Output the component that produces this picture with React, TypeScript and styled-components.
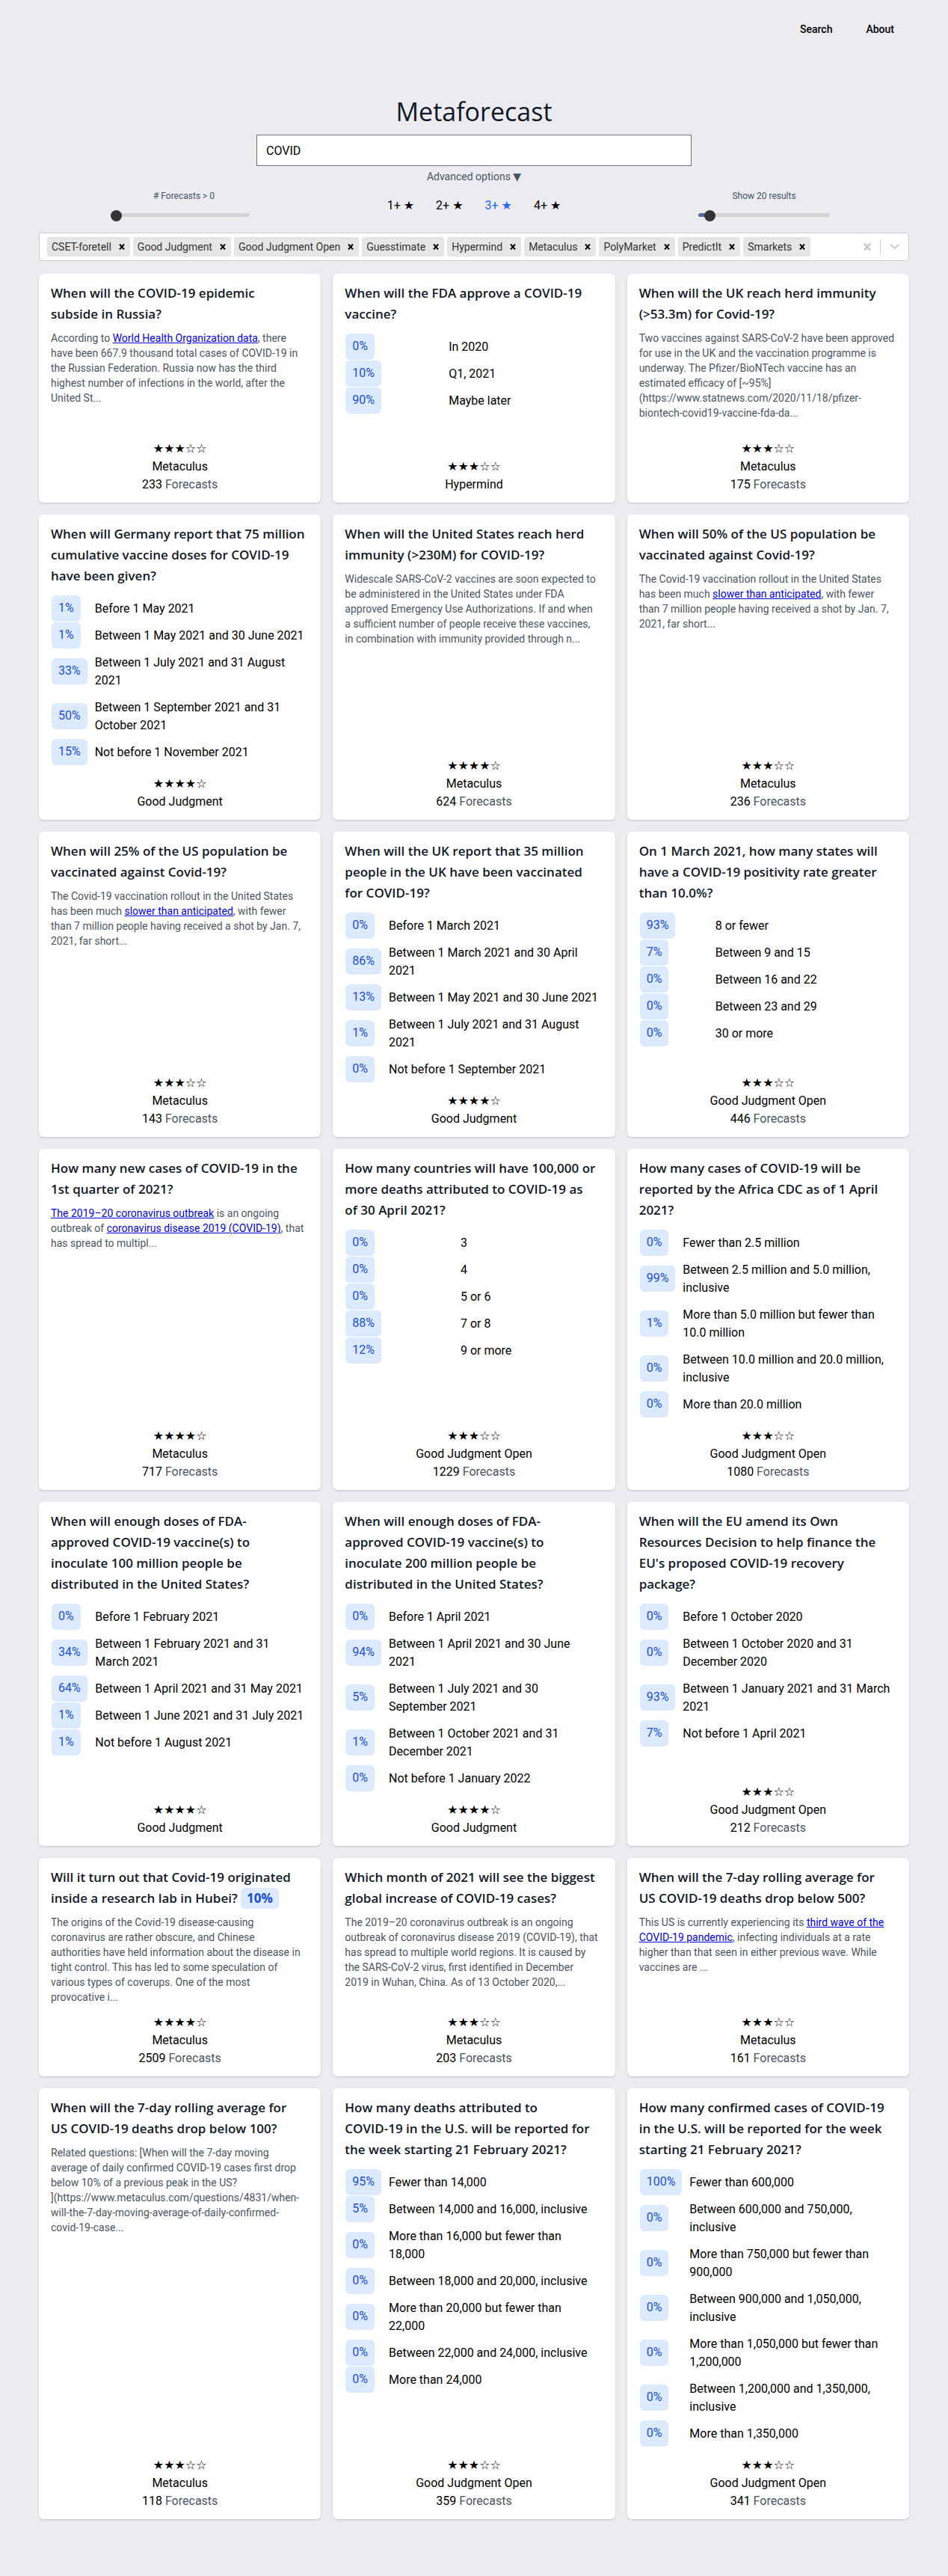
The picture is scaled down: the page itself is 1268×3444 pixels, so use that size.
import React, { useState } from "react";
import styled, { createGlobalStyle } from "styled-components";

const GlobalStyle = createGlobalStyle`
  *, *::before, *::after { box-sizing: border-box; }
  body {
    margin: 0;
    background: #ebebf0;
    color: #000;
    font: 400 16px/24px Roboto, "DejaVu Sans", sans-serif;
  }
  button, input { font: inherit; color: inherit; }
`;

const headingFont = '"Open Sans", "Noto Sans", sans-serif';

const Page = styled.div`
  padding: 0 52px 76px;
`;

const Nav = styled.nav`
  display: flex;
  justify-content: flex-end;
  gap: 45px;
  padding: 29px 20px 80px 0;
`;

const NavLink = styled.a`
  color: #000;
  font-size: 14px;
  font-weight: 500;
  line-height: 20px;
  text-decoration: none;
`;

const Heading = styled.h1`
  margin: 0 0 11px;
  color: #111827;
  font: 400 34px/40px ${headingFont};
  text-align: center;
`;

const SearchForm = styled.form`
  display: flex;
  flex-direction: column;
  align-items: center;
  gap: 4px;
`;

const SearchInput = styled.input`
  width: 50%;
  height: 42px;
  padding: 0 12px;
  border: 1px solid #6b7280;
  border-radius: 0;
  background: #fff;
`;

const AdvancedToggle = styled.button`
  padding: 0;
  border: 0;
  background: none;
  color: #4b5563;
  font-size: 14px;
  line-height: 20px;
  cursor: pointer;
`;

const Options = styled.div`
  display: grid;
  grid-template-columns: repeat(3, 1fr);
  justify-items: center;
  padding: 8px 0 16px;
`;

const SliderField = styled.label`
  display: flex;
  flex-direction: column;
  align-items: center;
  gap: 10px;
  width: 176px;
  color: #475569;
  font-size: 12px;
  line-height: 16px;
`;

const Slider = styled.input<{ $fill: number; $overhang?: number }>`
  appearance: none;
  align-self: flex-end;
  width: ${(p) => 176 + (p.$overhang ?? 0)}px;
  height: 15px;
  margin: 0;
  background: none;

  &::-webkit-slider-runnable-track {
    height: 5px;
    border-radius: 3px;
    background: linear-gradient(to right, #546e9a ${(p) => p.$fill}%, #d3d3d1 ${(p) => p.$fill}%);
  }

  &::-webkit-slider-thumb {
    appearance: none;
    width: 15px;
    height: 15px;
    margin-top: -4px;
    border-radius: 50%;
    background: #343434;
  }
`;

const StarFilters = styled.div`
  display: flex;
  gap: 29px;
  padding-top: 9px;
`;

const StarFilter = styled.button<{ $active: boolean }>`
  height: 24px;
  padding: 0;
  border: 0;
  background: none;
  color: ${(p) => (p.$active ? "#2563eb" : "#000")};
  line-height: 24px;
  cursor: pointer;
`;

const PlatformSelect = styled.div`
  display: flex;
  align-items: center;
  min-height: 38px;
  margin-bottom: 17px;
  padding: 0 12px 0 10px;
  border: 1px solid #ccc;
  border-radius: 4px;
  background: #fff;
`;

const Tags = styled.ul`
  display: flex;
  flex: 1;
  flex-wrap: wrap;
  gap: 4px;
  margin: 0;
  padding: 0;
  list-style: none;
`;

const Tag = styled.li`
  display: flex;
  align-items: center;
  height: 26px;
  padding-left: 6px;
  border-radius: 2px;
  background: #e6e6e6;
  color: #333;
  font-size: 14px;
  line-height: 20px;
`;

const IconButton = styled.button<{ $tone: string; $pad: string }>`
  display: flex;
  padding: ${(p) => p.$pad};
  border: 0;
  background: none;
  color: ${(p) => p.$tone};
  cursor: pointer;
`;

const Divider = styled.span`
  width: 1px;
  height: 20px;
  background: #ccc;
`;

const Cards = styled.main`
  display: grid;
  grid-template-columns: repeat(3, minmax(0, 1fr));
  gap: 16px;
`;

const CardBox = styled.article`
  display: flex;
  flex-direction: column;
  padding: 12px 16px;
  border-radius: 6px;
  background: #fff;
  box-shadow: 0 1px 3px rgba(0, 0, 0, 0.1), 0 1px 2px rgba(0, 0, 0, 0.08);
`;

const CardTitle = styled.h2`
  margin: 0 0 8px;
  color: #111827;
  font: 600 17px/28px ${headingFont};
  white-space: pre-line;
`;

const TitleBadge = styled.span`
  display: inline-block;
  padding: 0 8px;
  border-radius: 6px;
  background: #dbeafe;
  color: #1d4ed8;
  font-weight: 700;
`;

const Description = styled.p<{ $roomy?: boolean }>`
  margin: 0;
  padding-bottom: ${(p) => (p.$roomy ? 26 : 12)}px;
  color: #4b5563;
  font-size: 14px;
  line-height: 20px;
  white-space: pre-line;
`;

const TextLink = styled.a`
  color: #00e;
`;

const Outcomes = styled.table`
  width: 100%;
  margin: 4px 0 12px;
  border-collapse: collapse;
`;

const ChanceCell = styled.td`
  padding: 0 10px 1px 1px;
`;

const Chance = styled.span`
  display: block;
  width: fit-content;
  padding: 5px 9px 6px;
  border-radius: 6px;
  background: #dbeafe;
  color: #1d4ed8;
`;

const OutcomeName = styled.th`
  padding: 6px 4px 6px 0;
  font-weight: 400;
  text-align: left;
  white-space: pre-line;
`;

const CardFooter = styled.footer`
  display: flex;
  flex-direction: column;
  align-items: center;
  margin-top: auto;
`;

const Count = styled.span`
  color: #4b5563;
`;

const CountValue = styled.span`
  color: #000;
`;

type Part = string | { link: string };

interface Forecast {
  title: string;
  chance?: string;
  text?: Part[];
  roomy?: boolean;
  outcomes?: [string, string][];
  stars: number;
  platform: string;
  count?: number;
}

const rollout: Part[] = [
  "The Covid-19 vaccination rollout in the United States has been much ",
  { link: "slower than anticipated" },
  ", with fewer than 7 million people having received a shot by Jan. 7, 2021, far short...",
];

const forecasts: Forecast[] = [
  {
    title: "When will the COVID-19 epidemic\nsubside in Russia?",
    text: [
      "According to ",
      { link: "World Health Organization data" },
      ", there have been 667.9 thousand total cases of COVID-19 in the Russian Federation. Russia now has the third highest number of infections in the world, after the United St...",
    ],
    stars: 3, platform: "Metaculus", count: 233,
  },
  {
    title: "When will the FDA approve a COVID-19 vaccine?",
    outcomes: [["0%", "In 2020"], ["10%", "Q1, 2021"], ["90%", "Maybe later"]],
    stars: 3, platform: "Hypermind",
  },
  {
    title: "When will the UK reach herd immunity (>53.3m) for Covid-19?",
    text: [
      "Two vaccines against SARS-CoV-2 have been approved for use in the UK and the vaccination programme is underway. The Pfizer/BioNTech vaccine has an estimated efficacy of [~95%]\n(https://www.statnews.com/2020/11/18/pfizer-biontech-covid19-vaccine-fda-da...",
    ],
    roomy: true,
    stars: 3, platform: "Metaculus", count: 175,
  },
  {
    title: "When will Germany report that 75 million cumulative vaccine doses for COVID-19 have been given?",
    outcomes: [
      ["1%", "Before 1 May 2021"],
      ["1%", "Between 1 May 2021 and 30 June 2021"],
      ["33%", "Between 1 July 2021 and 31 August 2021"],
      ["50%", "Between 1 September 2021 and 31 October 2021"],
      ["15%", "Not before 1 November 2021"],
    ],
    stars: 4, platform: "Good Judgment",
  },
  {
    title: "When will the United States reach herd immunity (>230M) for COVID-19?",
    text: [
      "Widescale SARS-CoV-2 vaccines are soon expected to be administered in the United States under FDA approved Emergency Use Authorizations. If and when\na sufficient number of people receive these vaccines,\nin combination with immunity provided through n...",
    ],
    stars: 4, platform: "Metaculus", count: 624,
  },
  {
    title: "When will 50% of the US population be vaccinated against Covid-19?",
    text: rollout,
    stars: 3, platform: "Metaculus", count: 236,
  },
  {
    title: "When will 25% of the US population be vaccinated against Covid-19?",
    text: rollout,
    stars: 3, platform: "Metaculus", count: 143,
  },
  {
    title: "When will the UK report that 35 million people in the UK have been vaccinated for COVID-19?",
    outcomes: [
      ["0%", "Before 1 March 2021"],
      ["86%", "Between 1 March 2021 and 30 April 2021"],
      ["13%", "Between 1 May 2021 and 30 June 2021"],
      ["1%", "Between 1 July 2021 and 31 August 2021"],
      ["0%", "Not before 1 September 2021"],
    ],
    stars: 4, platform: "Good Judgment",
  },
  {
    title: "On 1 March 2021, how many states will have a COVID-19 positivity rate greater than 10.0%?",
    outcomes: [
      ["93%", "8 or fewer"],
      ["7%", "Between 9 and 15"],
      ["0%", "Between 16 and 22"],
      ["0%", "Between 23 and 29"],
      ["0%", "30 or more"],
    ],
    stars: 3, platform: "Good Judgment Open", count: 446,
  },
  {
    title: "How many new cases of COVID-19 in the 1st quarter of 2021?",
    text: [
      { link: "The 2019–20 coronavirus outbreak" },
      " is an ongoing outbreak of ",
      { link: "coronavirus disease 2019 (COVID-19)" },
      ", that has spread to multipl...",
    ],
    stars: 4, platform: "Metaculus", count: 717,
  },
  {
    title: "How many countries will have 100,000 or more deaths attributed to COVID-19 as\nof 30 April 2021?",
    outcomes: [["0%", "3"], ["0%", "4"], ["0%", "5 or 6"], ["88%", "7 or 8"], ["12%", "9 or more"]],
    stars: 3, platform: "Good Judgment Open", count: 1229,
  },
  {
    title: "How many cases of COVID-19 will be reported by the Africa CDC as of 1 April 2021?",
    outcomes: [
      ["0%", "Fewer than 2.5 million"],
      ["99%", "Between 2.5 million and 5.0 million, inclusive"],
      ["1%", "More than 5.0 million but fewer than 10.0 million"],
      ["0%", "Between 10.0 million and 20.0 million, inclusive"],
      ["0%", "More than 20.0 million"],
    ],
    stars: 3, platform: "Good Judgment Open", count: 1080,
  },
  {
    title: "When will enough doses of FDA-\napproved COVID-19 vaccine(s) to\ninoculate 100 million people be\ndistributed in the United States?",
    outcomes: [
      ["0%", "Before 1 February 2021"],
      ["34%", "Between 1 February 2021 and 31\nMarch 2021"],
      ["64%", "Between 1 April 2021 and 31 May 2021"],
      ["1%", "Between 1 June 2021 and 31 July 2021"],
      ["1%", "Not before 1 August 2021"],
    ],
    stars: 4, platform: "Good Judgment",
  },
  {
    title: "When will enough doses of FDA-\napproved COVID-19 vaccine(s) to\ninoculate 200 million people be\ndistributed in the United States?",
    outcomes: [
      ["0%", "Before 1 April 2021"],
      ["94%", "Between 1 April 2021 and 30 June\n2021"],
      ["5%", "Between 1 July 2021 and 30\nSeptember 2021"],
      ["1%", "Between 1 October 2021 and 31 December 2021"],
      ["0%", "Not before 1 January 2022"],
    ],
    stars: 4, platform: "Good Judgment",
  },
  {
    title: "When will the EU amend its Own Resources Decision to help finance the EU's proposed COVID-19 recovery package?",
    outcomes: [
      ["0%", "Before 1 October 2020"],
      ["0%", "Between 1 October 2020 and 31 December 2020"],
      ["93%", "Between 1 January 2021 and 31 March 2021"],
      ["7%", "Not before 1 April 2021"],
    ],
    stars: 3, platform: "Good Judgment Open", count: 212,
  },
  {
    title: "Will it turn out that Covid-19 originated inside a research lab in Hubei?",
    chance: "10%",
    text: [
      "The origins of the Covid-19 disease-causing coronavirus are rather obscure, and Chinese\nauthorities have held information about the disease in\ntight control. This has led to some speculation of\nvarious types of coverups. One of the most\nprovocative i...",
    ],
    stars: 4, platform: "Metaculus", count: 2509,
  },
  {
    title: "Which month of 2021 will see the biggest global increase of COVID-19 cases?",
    text: [
      "The 2019–20 coronavirus outbreak is an ongoing outbreak of coronavirus disease 2019 (COVID-19), that has spread to multiple world regions. It is caused by\nthe SARS-CoV-2 virus, first identified in December\n2019 in Wuhan, China. As of 13 October 2020,...",
    ],
    stars: 3, platform: "Metaculus", count: 203,
  },
  {
    title: "When will the 7-day rolling average for\nUS COVID-19 deaths drop below 500?",
    text: [
      "This US is currently experiencing its ",
      { link: "third wave of the COVID-19 pandemic" },
      ", infecting individuals at a rate higher than that seen in either previous wave. While vaccines are ...",
    ],
    stars: 3, platform: "Metaculus", count: 161,
  },
  {
    title: "When will the 7-day rolling average for\nUS COVID-19 deaths drop below 100?",
    text: [
      "Related questions: [When will the 7-day moving\naverage of daily confirmed COVID-19 cases first drop\nbelow 10% of a previous peak in the US?\n](https://www.metaculus.com/questions/4831/when-\nwill-the-7-day-moving-average-of-daily-confirmed-\ncovid-19-case...",
    ],
    stars: 3, platform: "Metaculus", count: 118,
  },
  {
    title: "How many deaths attributed to\nCOVID-19 in the U.S. will be reported for the week starting 21 February 2021?",
    outcomes: [
      ["95%", "Fewer than 14,000"],
      ["5%", "Between 14,000 and 16,000, inclusive"],
      ["0%", "More than 16,000 but fewer than 18,000"],
      ["0%", "Between 18,000 and 20,000, inclusive"],
      ["0%", "More than 20,000 but fewer than 22,000"],
      ["0%", "Between 22,000 and 24,000, inclusive"],
      ["0%", "More than 24,000"],
    ],
    stars: 3, platform: "Good Judgment Open", count: 359,
  },
  {
    title: "How many confirmed cases of COVID-19 in the U.S. will be reported for the week starting 21 February 2021?",
    outcomes: [
      ["100%", "Fewer than 600,000"],
      ["0%", "Between 600,000 and 750,000, inclusive"],
      ["0%", "More than 750,000 but fewer than 900,000"],
      ["0%", "Between 900,000 and 1,050,000, inclusive"],
      ["0%", "More than 1,050,000 but fewer than 1,200,000"],
      ["0%", "Between 1,200,000 and 1,350,000, inclusive"],
      ["0%", "More than 1,350,000"],
    ],
    stars: 3, platform: "Good Judgment Open", count: 341,
  },
];

const allPlatforms = [
  "CSET-foretell", "Good Judgment", "Good Judgment Open", "Guesstimate", "Hypermind",
  "Metaculus", "PolyMarket", "PredictIt", "Smarkets",
];

function Cross({ width, height, stroke }: { width: number; height: number; stroke: number }) {
  return (
    <svg width={width} height={height} viewBox={`0 0 ${width} ${height}`} aria-hidden="true">
      <path
        d={`M1 0.5 L${width - 1} ${height - 0.5} M${width - 1} 0.5 L1 ${height - 0.5}`}
        stroke="currentColor"
        strokeWidth={stroke}
      />
    </svg>
  );
}

function Chevron() {
  return (
    <svg width="13" height="8" viewBox="0 0 13 8" fill="none" aria-hidden="true">
      <path d="M1.5 1.5 L6.5 6 L11.5 1.5" stroke="currentColor" strokeWidth="2" strokeLinecap="round" />
    </svg>
  );
}

function Card({ item }: { item: Forecast }) {
  return (
    <CardBox>
      <CardTitle>
        {item.title}
        {item.chance && <> <TitleBadge>{item.chance}</TitleBadge></>}
      </CardTitle>
      {item.text && (
        <Description $roomy={item.roomy}>
          {item.text.map((part, i) =>
            typeof part === "string" ? part : <TextLink key={i} href="#">{part.link}</TextLink>
          )}
        </Description>
      )}
      {item.outcomes && (
        <Outcomes>
          <tbody>
            {item.outcomes.map(([chance, name]) => (
              <tr key={name}>
                <ChanceCell><Chance>{chance}</Chance></ChanceCell>
                <OutcomeName scope="row">{name}</OutcomeName>
              </tr>
            ))}
          </tbody>
        </Outcomes>
      )}
      <CardFooter>
        <span>{"★".repeat(item.stars) + "☆".repeat(5 - item.stars)}</span>
        <span>{item.platform}</span>
        {item.count && <Count><CountValue>{item.count}</CountValue> Forecasts</Count>}
      </CardFooter>
    </CardBox>
  );
}

export default function App() {
  const [query, setQuery] = useState("COVID");
  const [minForecasts, setMinForecasts] = useState(0);
  const [shown, setShown] = useState(20);
  const [minStars, setMinStars] = useState(3);
  const [platforms, setPlatforms] = useState(allPlatforms);

  return (
    <>
      <GlobalStyle />
      <Page>
        <Nav>
          <NavLink href="#search">Search</NavLink>
          <NavLink href="#about">About</NavLink>
        </Nav>
        <Heading>Metaforecast</Heading>
        <SearchForm onSubmit={(e) => e.preventDefault()}>
          <SearchInput
            type="text"
            aria-label="Search forecasts"
            value={query}
            onChange={(e) => setQuery(e.target.value)}
          />
          <AdvancedToggle type="button">Advanced options ▼</AdvancedToggle>
        </SearchForm>
        <Options>
          <SliderField>
            # Forecasts &gt; {minForecasts}
            <Slider
              type="range" min={0} max={200} value={minForecasts}
              $fill={0} $overhang={10}
              onChange={(e) => setMinForecasts(Number(e.target.value))}
            />
          </SliderField>
          <StarFilters>
            {[1, 2, 3, 4].map((n) => (
              <StarFilter key={n} type="button" $active={n === minStars} onClick={() => setMinStars(n)}>
                {n}+ ★
              </StarFilter>
            ))}
          </StarFilters>
          <SliderField>
            Show {shown} results
            <Slider
              type="range" min={0} max={400} value={shown}
              $fill={shown / 4 + 3}
              onChange={(e) => setShown(Number(e.target.value))}
            />
          </SliderField>
        </Options>
        <PlatformSelect>
          <Tags>
            {platforms.map((name) => (
              <Tag key={name}>
                {name}
                <IconButton
                  type="button" $tone="#000" $pad="9px 7px 9px 10px"
                  aria-label={`Remove ${name}`}
                  onClick={() => setPlatforms(platforms.filter((p) => p !== name))}
                >
                  <Cross width={8} height={8} stroke={2} />
                </IconButton>
              </Tag>
            ))}
          </Tags>
          <IconButton type="button" $tone="#ccc" $pad="8px 12px" aria-label="Clear all" onClick={() => setPlatforms([])}>
            <Cross width={10} height={10} stroke={3} />
          </IconButton>
          <Divider />
          <IconButton type="button" $tone="#ccc" $pad="8px 0 8px 12px" aria-label="Show platforms">
            <Chevron />
          </IconButton>
        </PlatformSelect>
        <Cards>
          {forecasts.map((item) => <Card key={item.title} item={item} />)}
        </Cards>
      </Page>
    </>
  );
}
